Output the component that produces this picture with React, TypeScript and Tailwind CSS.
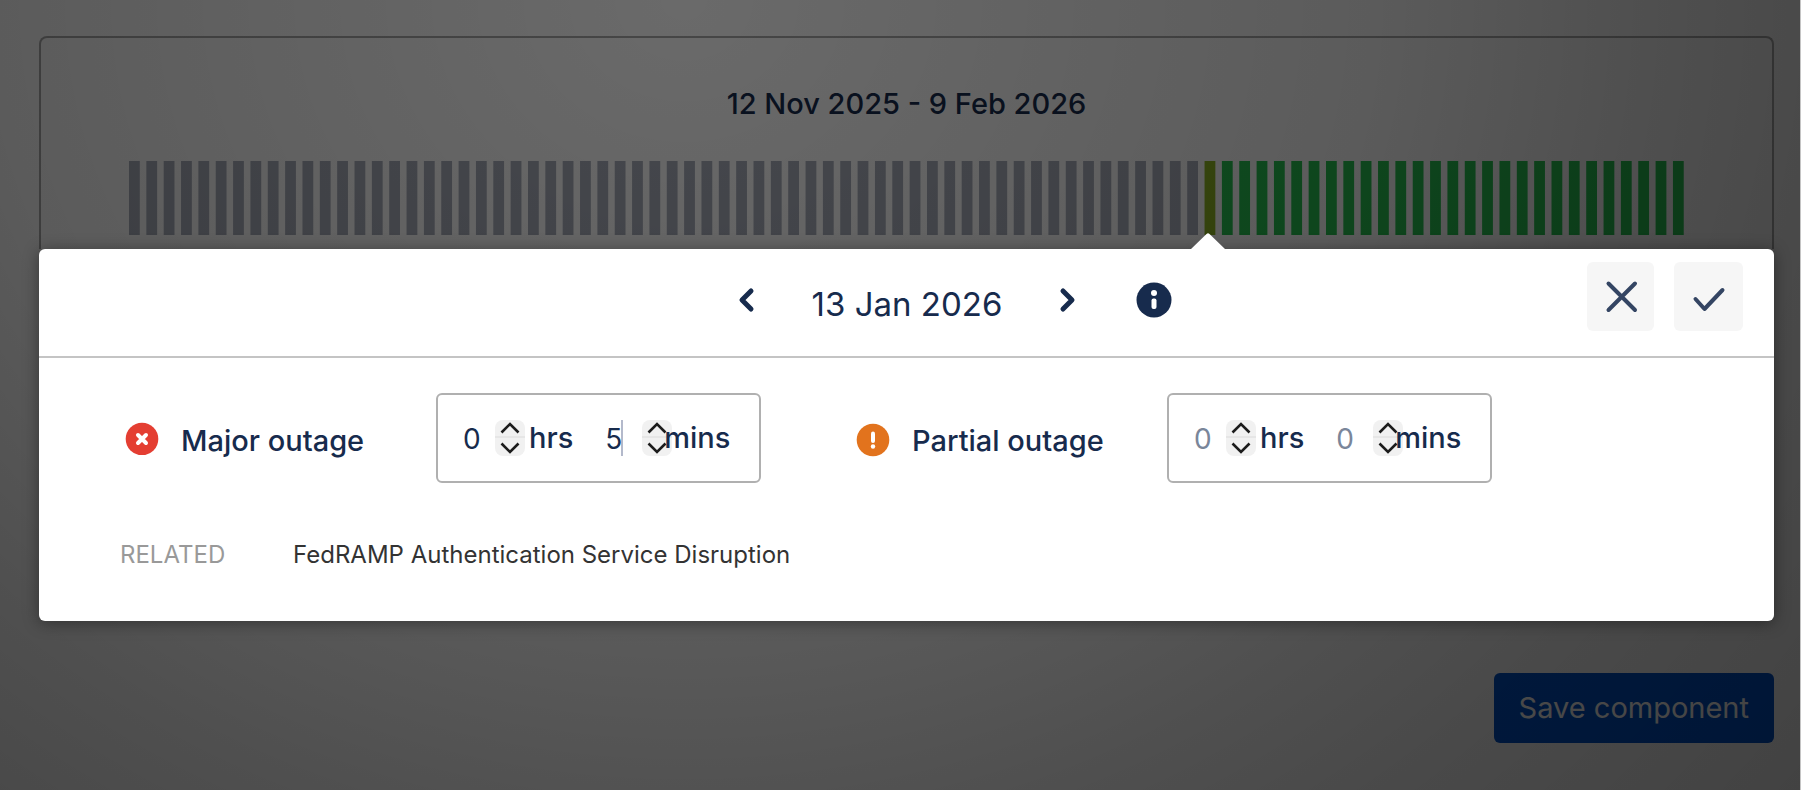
import { useState } from "react";

const DAY_COUNT = 90;
const SELECTED_DAY = 62;
const BAR_PITCH = 17.37;
const BAR_WIDTH = 10.8;

function barColor(day: number) {
  if (day < SELECTED_DAY) return "#a9aebb";
  if (day === SELECTED_DAY) return "#8eb523";
  return "#27c351";
}

function UptimeChart() {
  return (
    <svg
      viewBox="0 0 1557 74"
      preserveAspectRatio="none"
      className="mt-[39px] block h-[74px] w-full"
      role="img"
      aria-label="Daily uptime"
    >
      {Array.from({ length: DAY_COUNT }, (_, day) => (
        <rect key={day} x={day * BAR_PITCH} y="0" width={BAR_WIDTH} height="74" fill={barColor(day)} />
      ))}
    </svg>
  );
}

type TimeFieldProps = {
  label: string;
  unit: string;
  initial: string;
  wide?: boolean;
  showCaret?: boolean;
};

function TimeField({ label, unit, initial, wide, showCaret }: TimeFieldProps) {
  const [value, setValue] = useState(initial);
  const step = (delta: number) => setValue(String(Math.max(0, Number(value || 0) + delta)));

  return (
    <label className={wide ? "ml-8 flex items-center" : "flex items-center"}>
      <span className={wide ? "relative w-[37px]" : "relative w-[32px]"}>
        <input
          type="text"
          inputMode="numeric"
          aria-label={`${label} ${unit}`}
          placeholder="0"
          value={value}
          onChange={(event) => setValue(event.target.value)}
          className="block h-9 w-full bg-transparent pt-[2px] text-[28px] text-[#172b4d] outline-none placeholder:text-[#7a869a]"
        />
        {showCaret && <span className="absolute top-0 left-[16px] h-9 w-[2px] bg-[#b3b9cb]" />}
      </span>
      <span className="relative grid h-9 w-[30px] shrink-0 grid-rows-2 rounded-lg bg-[#f1f1f1]">
        <button type="button" aria-label={`Increase ${unit}`} onClick={() => step(1)} className="flex items-center justify-center border-b-2 border-[#e6e6e6]">
          <svg width="30" height="17" viewBox="0 0 30 17" fill="none" stroke="#1c1c1c" strokeWidth="2.6" className="shrink-0">
            <path d="M6.5 12.5 15 4l8.5 8.5" />
          </svg>
        </button>
        <button type="button" aria-label={`Decrease ${unit}`} onClick={() => step(-1)} className="flex items-center justify-center">
          <svg width="30" height="18" viewBox="0 0 30 18" fill="none" stroke="#1c1c1c" strokeWidth="2.6" className="shrink-0">
            <path d="M6.5 5.5 15 14l8.5-8.5" />
          </svg>
        </button>
      </span>
      <span className={wide ? "relative -ml-2 text-[29px] font-medium" : "ml-1 text-[29px] font-medium"}>{unit}</span>
    </label>
  );
}

function Duration({ label, minutes, hours, showCaret }: { label: string; hours: string; minutes: string; showCaret?: boolean }) {
  return (
    <div className="flex h-[90px] w-[325px] shrink-0 items-center rounded-md border-2 border-[#b0b0b0] pl-[25px]">
      <TimeField label={label} unit="hrs" initial={hours} />
      <TimeField label={label} unit="mins" initial={minutes} wide showCaret={showCaret} />
    </div>
  );
}

export default function App() {
  return (
    <div className="relative min-h-screen border-r border-[#c4c4c4] bg-white pt-[36px] pr-[26px] pb-[46px] pl-[39px] font-['Inter',sans-serif] text-[#172b4d]">
      <section className="h-[213px] rounded-t-lg border-2 border-b-0 border-[#aaaaaa] px-[88px] pt-[47px]">
        <h1 className="text-center text-[29px] leading-[37px] font-medium">12 Nov 2025 - 9 Feb 2026</h1>
        <UptimeChart />
      </section>

      <div className="pointer-events-none absolute inset-0 z-10 bg-[radial-gradient(1433px_1268px_at_38%_0px,rgba(0,0,0,0.584)_0%,rgba(0,0,0,0.643)_48%,rgba(0,0,0,0.69)_67%,rgba(0,0,0,0.712)_79%,rgba(0,0,0,0.741)_100%)]" />

      <div role="dialog" aria-label="Edit outage" className="relative z-20 rounded-md bg-white pb-[49px] shadow-[0_2px_16px_rgba(0,0,0,0.4)]">
        <svg width="36" height="18" viewBox="0 0 36 18" className="absolute -top-4 left-[1151px]" aria-hidden="true">
          <path d="M0 17 16.5 1q1.5-1.5 3 0L36 17v1H0z" fill="#fff" />
        </svg>

        <header className="grid h-[109px] grid-cols-[1fr_auto_1fr] items-start border-b-2 border-[#c4c4c4] pt-[13px]">
          <span />
          <div className="flex h-[76px] items-center pl-[90px]">
            <button type="button" aria-label="Previous day" className="flex size-8 items-center justify-center">
              <svg width="32" height="32" viewBox="0 0 32 32" fill="none" stroke="#172b4d" strokeWidth="5" strokeLinecap="round" strokeLinejoin="round">
                <path d="M20 7 11 16l9 9" />
              </svg>
            </button>
            <span className="mx-[49px] pt-2 text-[33px] leading-10">13 Jan 2026</span>
            <button type="button" aria-label="Next day" className="flex size-8 items-center justify-center">
              <svg width="32" height="32" viewBox="0 0 32 32" fill="none" stroke="#172b4d" strokeWidth="5" strokeLinecap="round" strokeLinejoin="round">
                <path d="m12 7 9 9-9 9" />
              </svg>
            </button>
            <button type="button" aria-label="Day details" className="ml-[53px]">
              <svg width="36" height="36" viewBox="0 0 36 36">
                <circle cx="18" cy="18" r="17.5" fill="#172b4d" />
                <circle cx="18" cy="11" r="3" fill="#fff" />
                <rect x="15.5" y="16.5" width="5" height="10.5" rx="2" fill="#fff" />
              </svg>
            </button>
          </div>
          <div className="flex justify-end gap-5 pr-[31px]">
            <button type="button" aria-label="Cancel" className="flex h-[69px] w-[67px] items-center justify-center rounded-md bg-[#f6f6f6]">
              <svg width="36" height="36" viewBox="0 0 36 36" fill="none" stroke="#344563" strokeWidth="4" strokeLinecap="round">
                <path d="M5.5 4.5 32 31M32 4.5 5.5 31" />
              </svg>
            </button>
            <button type="button" aria-label="Confirm" className="flex size-[69px] items-center justify-center rounded-md bg-[#f6f6f6]">
              <svg width="36" height="36" viewBox="0 0 36 36" fill="none" stroke="#344563" strokeWidth="4" strokeLinecap="round" strokeLinejoin="round">
                <path d="m4.5 20 9 10L31.5 11" />
              </svg>
            </button>
          </div>
        </header>

        <div className="flex items-center pt-[35px] pl-[86px]">
          <div className="flex w-[311px] shrink-0 items-center gap-[22px]">
            <svg width="34" height="34" viewBox="0 0 34 34" className="shrink-0" aria-hidden="true">
              <circle cx="17" cy="18" r="16.3" fill="#e43e32" />
              <path d="m13 14 8 8m0-8-8 8" stroke="#fff" strokeWidth="4" strokeLinecap="round" />
            </svg>
            <span className="pt-[6px] text-[29px] leading-9 font-medium">Major outage</span>
          </div>
          <Duration label="Major outage" hours="0" minutes="5" showCaret />
          <div className="ml-[95px] flex w-[311px] shrink-0 items-center gap-[22px]">
            <svg width="34" height="38" viewBox="0 0 34 38" className="shrink-0" aria-hidden="true">
              <circle cx="17" cy="21" r="16.3" fill="#e2731d" />
              <rect x="15" y="12.5" width="4" height="11.5" rx="2" fill="#fff" />
              <circle cx="17" cy="27.5" r="2.2" fill="#fff" />
            </svg>
            <span className="pt-[6px] text-[29px] leading-9 font-medium">Partial outage</span>
          </div>
          <Duration label="Partial outage" hours="" minutes="" />
        </div>

        <div className="flex items-center pt-[55px] pl-[81px] text-[24px] leading-[34px]">
          <h2 className="w-[173px] text-[#999999]">RELATED</h2>
          <p className="text-[#333333]">FedRAMP Authentication Service Disruption</p>
        </div>
      </div>

      <div className="mt-[52px] flex justify-end">
        <button type="button" className="h-[70px] rounded-md bg-[#0052cc] px-[25px] text-[29px] text-white">
          Save component
        </button>
      </div>
    </div>
  );
}
